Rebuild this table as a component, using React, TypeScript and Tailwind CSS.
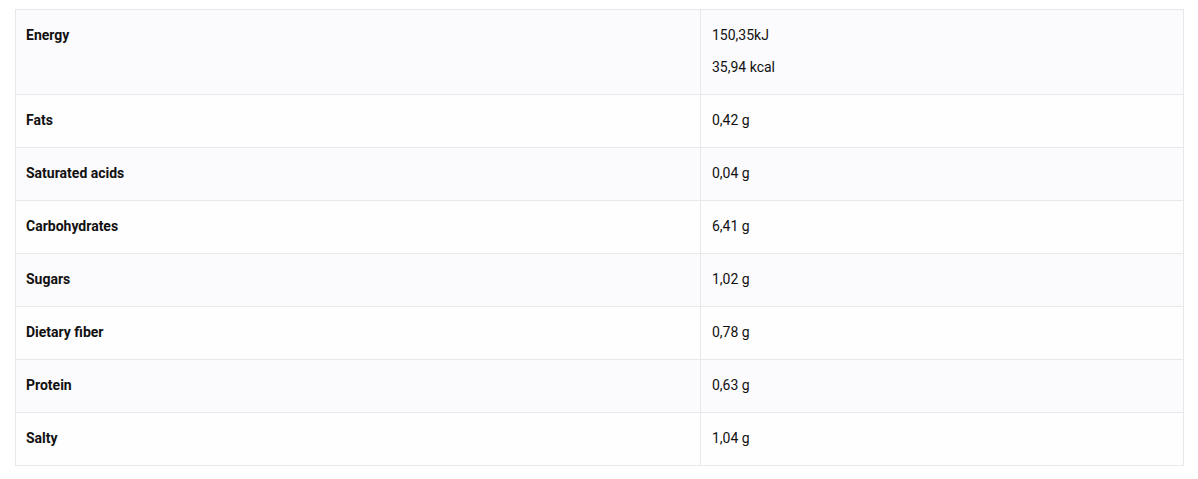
const rows: { label: string; values: string[] }[] = [
  { label: "Energy", values: ["150,35kJ", "35,94 kcal"] },
  { label: "Fats", values: ["0,42 g"] },
  { label: "Saturated acids", values: ["0,04 g"] },
  { label: "Carbohydrates", values: ["6,41 g"] },
  { label: "Sugars", values: ["1,02 g"] },
  { label: "Dietary fiber", values: ["0,78 g"] },
  { label: "Protein", values: ["0,63 g"] },
  { label: "Salty", values: ["1,04 g"] },
];

export default function App() {
  return (
    <div className="w-[1198px] h-[479px] bg-white pt-[9px] pl-[15px] font-['Roboto',sans-serif] text-[14px] text-[#111]">
      <table className="w-[1169px] border-collapse border border-[#e8e8eb]">
        <tbody>
          {rows.map((r, i) => (
            <tr key={r.label} className={i % 2 === 0 ? "bg-[#fbfafc]" : "bg-[#fefefe]"}>
              <td className="w-[685px] border border-[#e8e8eb] pl-[10px] pt-[17px] pb-[18px] align-top font-bold leading-[17px]">
                {r.label}
              </td>
              <td className="border border-[#e8e8eb] pl-[11px] pt-[17px] pb-[18px] align-top leading-[17px]">
                <div className="flex flex-col gap-[15px]">
                  {r.values.map((v) => (
                    <span key={v}>{v}</span>
                  ))}
                </div>
              </td>
            </tr>
          ))}
        </tbody>
      </table>
    </div>
  );
}
